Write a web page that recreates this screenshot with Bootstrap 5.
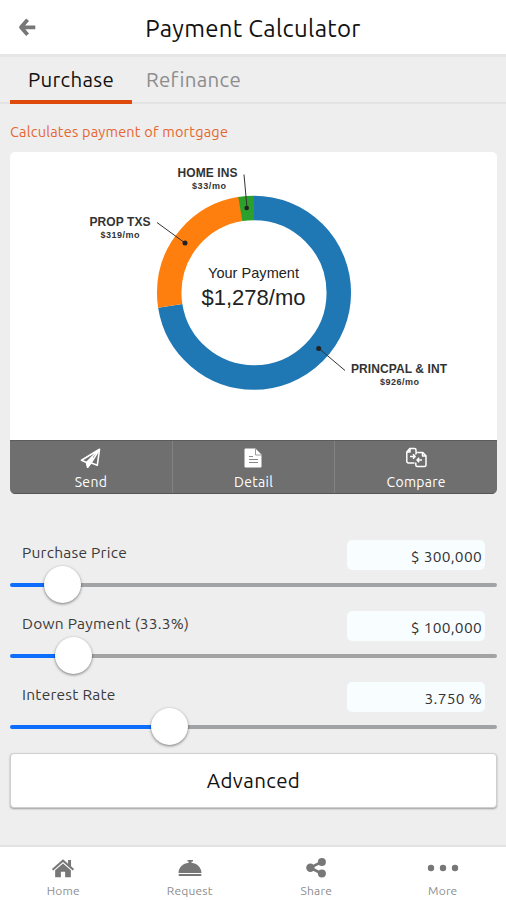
<!DOCTYPE html>
<html lang="en">
<head>
<meta charset="utf-8">
<meta name="viewport" content="width=device-width, initial-scale=1">
<title>Payment Calculator</title>
<link href="https://cdn.jsdelivr.net/npm/bootstrap@5.3.0/dist/css/bootstrap.min.css" rel="stylesheet">
<style>
  body { font-family: Ubuntu, "Noto Sans", sans-serif; background: #eee; color: #222; height: 900px; overflow: hidden; }
  .app-header { height: 57px; border-bottom: 3px solid #e6e6e6; padding: 1px 17px 0; }
  .app-title { font-size: 24px; letter-spacing: .3px; color: #111; padding-top: 4px; }
  .back-btn, .header-pad { width: 20px; }
  .mode-tabs { height: 47px; border-bottom: 2px solid #e3e3e3; padding-left: 10px; }
  .mode-tabs .nav-link { height: 47px; padding: 8px 0 0; font-size: 20.5px; letter-spacing: .3px; line-height: 30px; color: #8d8d8d; text-align: center; width: 123px; }
  .mode-tabs .nav-link.active { width: 122px; color: #111; border-bottom: 4px solid #dd4a0b; }
  .page-body { padding: 0 9px 0 10px; }
  .hint { height: 48px; padding-top: 18px; font-size: 14.5px; letter-spacing: .2px; line-height: 20px; color: #e5672f; }
  .pay-card { height: 342px; border-radius: 5px; }
  .donut-area { height: 288px; }
  .donut-area text { font-family: "Liberation Sans", Arial, sans-serif; }
  .tool-row { height: 54px; background: #6f6f6f; border-top: 1px solid #5c5c5c; border-bottom: 1px solid #555; }
  .tool-row .btn { color: #fff; font-size: 14px; letter-spacing: .3px; line-height: 18px; padding: 6px 0 0; gap: 4px; border: 0; border-radius: 0; }
  .tool-row .btn svg { flex: none; }
  .tool-row .btn + .btn { border-left: 1px solid #828282; }
  .sliders { padding-top: 46px; }
  .slider-row { height: 71px; }
  .slider-head { height: 30px; padding: 0 12px; }
  .slider-head label { font-size: 15.5px; letter-spacing: .25px; line-height: 20px; padding-top: 3px; color: #3a3a3a; }
  .value-box { width: 138px; height: 30px; border-radius: 5px; background: #f8fdff; padding: 2px 3px 0 0; font-size: 15.5px; letter-spacing: .3px; border: 0; color: #333; text-align: right; }
  .pay-range { display: block; height: 38px; margin-top: -4px; }
  .pay-range::-webkit-slider-runnable-track { height: 4.5px; border-radius: 3px;
    background: linear-gradient(to right, #0d6efd calc(18.5px + (100% - 37px) * var(--at)), #a2a3a5 0); }
  .pay-range::-webkit-slider-thumb { width: 37px; height: 37px; margin-top: -16.5px; background: #fff; border: 0; border-radius: 50%; box-shadow: 0 1px 3px rgba(0,0,0,.5); }
  .advanced { height: 55px; font-size: 20.5px; letter-spacing: .4px; color: #111; background: #fff; border: 1px solid #cfcfcf; border-radius: 4px; box-shadow: 0 1px 2px rgba(0,0,0,.35); padding: 1px 0 0; }
  .bottom-bar { height: 55px; border-top: 2px solid #e2e2e2; }
  .bottom-bar .nav-link { padding: 10px 0 0; gap: 1px; font-size: 12px; line-height: 18px; color: #8e8e8e; letter-spacing: .2px; }
  .bottom-bar svg { color: #777; flex: none; }
</style>
<script src="https://cdn.jsdelivr.net/npm/bootstrap@5.3.0/dist/js/bootstrap.bundle.min.js"></script>
</head>
<body class="d-flex flex-column">
<header class="app-header bg-white d-flex align-items-center justify-content-between flex-shrink-0">
  <a href="#" class="back-btn d-flex" aria-label="Back">
    <svg width="20" height="20" viewBox="0 0 20 20" fill="none" stroke="#777" stroke-width="3.8" stroke-linejoin="round"><path d="M10.600 1.700 4 9.300l6.600 7.500M4 9.300h14.300"/></svg>
  </a>
  <h1 class="app-title fw-normal m-0">Payment Calculator</h1>
  <span class="header-pad"></span>
</header>
<nav class="nav mode-tabs flex-nowrap flex-shrink-0">
  <a class="nav-link active" href="#">Purchase</a>
  <a class="nav-link" href="#">Refinance</a>
</nav>
<main class="page-body flex-grow-1">
  <p class="hint m-0">Calculates payment of mortgage</p>
  <section class="pay-card bg-white overflow-hidden">
    <svg class="donut-area d-block w-100" viewBox="10 152 487 288">
      <!-- ring shares: principal 72.5%, taxes 24.9%, insurance 2.6% -->
      <g fill="none" stroke-width="24.5" transform="rotate(-90 254 292.7)">
        <circle cx="254" cy="292.7" r="84.8" stroke="#1f77b4" pathLength="1000" stroke-dasharray="725 1000"/>
        <circle cx="254" cy="292.7" r="84.8" stroke="#ff7f0e" pathLength="1000" stroke-dasharray="250 1000" stroke-dashoffset="-725"/>
        <circle cx="254" cy="292.7" r="84.8" stroke="#2ca02c" pathLength="1000" stroke-dasharray="26 1000" stroke-dashoffset="-974"/>
      </g>
      <g stroke="#333" fill="#222"><path d="M244 174.500 247 208M157 222.500 185 243M319 348.500 345 370.500"/>
        <g stroke="none"><circle cx="246.700" cy="208" r="2.300"/><circle cx="185" cy="243" r="2.500"/><circle cx="318.700" cy="348.500" r="2.500"/></g>
      </g>
      <g text-anchor="middle" fill="#333" font-weight="bold">
        <text x="207.500" y="177" font-size="12" textLength="60">HOME INS</text>
        <text x="209" y="188.500" font-size="9" textLength="34">$33/mo</text>
        <text x="120" y="226" font-size="12" textLength="61">PROP TXS</text>
        <text x="120" y="237.500" font-size="9" textLength="39">$319/mo</text>
        <text x="399" y="373" font-size="12" textLength="96">PRINCPAL &amp; INT</text>
        <text x="399.500" y="384.500" font-size="9" textLength="39">$926/mo</text>
      </g>
      <g text-anchor="middle" fill="#222">
        <text x="253.500" y="278" font-size="14.500" textLength="91">Your Payment</text>
        <text x="253.500" y="305" font-size="22" textLength="104">$1,278/mo</text>
      </g>
    </svg>
    <div class="tool-row d-flex">
      <button class="btn flex-fill w-100 d-flex flex-column align-items-center">
        <svg width="22" height="22" viewBox="0 0 22 22" fill="none" stroke="#fff" stroke-width="1.600" stroke-linejoin="round"><path d="M19.500 2.300 1.500 13.300l5 2.200L19.500 2.300 17.300 18.300l-6-2.300"/><path d="m6.500 15.500 1 4.700 3.500-4.200 8.500-13.700"/><path d="m7.100 15.600 5.500-5.300-2 5.600-2.700 4z" fill="#fff"/></svg>
        Send
      </button>
      <button class="btn flex-fill w-100 d-flex flex-column align-items-center">
        <svg width="22" height="22" viewBox="0 0 22 22"><path d="M2.500 1.500h10l6 6v12a1 1 0 0 1-1 1h-15a1 1 0 0 1-1-1v-17a1 1 0 0 1 1-1z" fill="#fff"/><path d="M12.500 2v6h6" fill="none" stroke="#999" stroke-width="1"/><path d="M6 9.500h4M6 12.500h9M6 15.500h9" stroke="#888" stroke-width="1.200"/></svg>
        Detail
      </button>
      <button class="btn flex-fill w-100 d-flex flex-column align-items-center">
        <svg width="22" height="22" viewBox="0 0 22 22" fill="none" stroke="#fff" stroke-width="1.500" stroke-linejoin="round"><path d="M9.500 16H3.300a1.500 1.500 0 0 1-1.500-1.500V5l3-3.500h4.700A1.500 1.500 0 0 1 11 3v2.500M5 1.800V5H1.800"/><path d="M12.500 5.500h5.300l3.200 3.200V18a1.500 1.500 0 0 1-1.500 1.500h-7.200a1.500 1.500 0 0 1-1.500-1.500v-2.500M10.800 7.500V7a1.500 1.500 0 0 1 1.500-1.500M17.500 5.500V9H21"/><path d="M5 9.500h5M8 7.300l2.200 2.200L8 11.700M12 13h5M14.200 10.800 12 13l2.200 2.200"/></svg>
        Compare
      </button>
    </div>
  </section>
  <section class="sliders">
    <div class="slider-row">
      <div class="slider-head d-flex justify-content-between"><label for="price">Purchase Price</label><input class="value-box" value="$ 300,000" aria-label="Purchase price value"></div>
      <input id="price" type="range" class="form-range pay-range" min="0" max="1" step="any" value="0.0756" style="--at:.0756">
    </div>
    <div class="slider-row">
      <div class="slider-head d-flex justify-content-between"><label for="down">Down Payment (33.3%)</label><input class="value-box" value="$ 100,000" aria-label="Down payment value"></div>
      <input id="down" type="range" class="form-range pay-range" min="0" max="1" step="any" value="0.1" style="--at:.1">
    </div>
    <div class="slider-row">
      <div class="slider-head d-flex justify-content-between"><label for="rate">Interest Rate</label><input class="value-box" value="3.750 %" aria-label="Interest rate value"></div>
      <input id="rate" type="range" class="form-range pay-range" min="0" max="1" step="any" value="0.313" style="--at:.313">
    </div>
  </section>
  <button class="btn advanced w-100">Advanced</button>
</main>
<nav class="nav nav-fill bottom-bar bg-white flex-nowrap flex-shrink-0">
  <a class="nav-link w-25 d-flex flex-column align-items-center" href="#">
    <svg width="24" height="24" viewBox="0 0 26 24" fill="currentColor"><path d="M13 1.500 1 12l1.500 1.700L13 4.500l10.500 9.200L25 12l-3.300-2.900V2.300h-3.200v4z"/><path d="M13 6 4.500 13.400v7.600h6.200v-6h4.600v6h6.200v-7.600z"/></svg>Home</a>
  <a class="nav-link w-25 d-flex flex-column align-items-center" href="#">
    <svg width="26" height="24" viewBox="0 0 26 24" fill="currentColor"><path d="M10.500 3h5.500v1.600h-1.500v1.200C20 6.500 24.500 10.500 24.500 16h-23C1.500 10.500 6 6.500 11.700 5.800V4.600h-1.200zM1.700 17h22.600v2H1.700z"/></svg>Request</a>
  <a class="nav-link w-25 d-flex flex-column align-items-center" href="#">
    <svg width="26" height="24" viewBox="0 0 26 24" fill="currentColor"><path d="M18.500 5 7.300 10.700l11.200 5.800" fill="none" stroke="currentColor" stroke-width="2.600"/><circle cx="18.900" cy="4.900" r="4"/><circle cx="7.400" cy="10.700" r="4.200"/><circle cx="18.900" cy="16.600" r="4"/></svg>Share</a>
  <a class="nav-link w-25 d-flex flex-column align-items-center" href="#">
    <svg width="34" height="24" viewBox="0 0 34 24" fill="currentColor"><circle cx="5" cy="11" r="3.200"/><circle cx="17" cy="11" r="3.200"/><circle cx="29" cy="11" r="3.200"/></svg>More</a>
</nav>
</body>
</html>
